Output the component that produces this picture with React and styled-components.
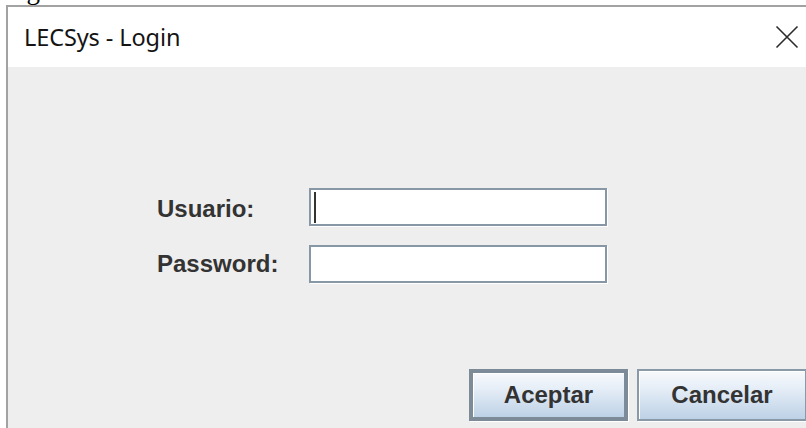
import React from "react";
import styled, { createGlobalStyle } from "styled-components";

const Global = createGlobalStyle`
  html, body {
    margin: 0;
    padding: 0;
    background: #ffffff;
    overflow: hidden;
  }
  body {
    width: 806px;
    height: 428px;
  }
`;

const Page = styled.div`
  width: 806px;
  height: 428px;
  overflow: hidden;
  display: flex;
  flex-direction: column;
`;

/* last line of the document text above the dialog, mostly cut off */
const DocLine = styled.div`
  height: 5px;
  overflow: hidden;
  padding-left: 4px;
  flex: none;
`;

const DocText = styled.div`
  font-family: "Liberation Serif", serif;
  font-size: 27px;
  line-height: 30px;
  color: #000;
  margin-top: -25px;
`;

const Frame = styled.div`
  margin-left: 6px;
  width: 800px;
  flex: 1;
  border-left: 2px solid #a2a2a2;
  border-top: 2px solid #a2a2a2;
  display: flex;
  flex-direction: column;
`;

const TitleBar = styled.div`
  height: 60px;
  flex: none;
  background: #ffffff;
  display: flex;
  align-items: center;
  justify-content: space-between;
  padding: 0 9px 0 16px;
`;

const Title = styled.span`
  font-family: "Noto Sans", "Open Sans", sans-serif;
  font-size: 23.5px;
  color: #141414;
  letter-spacing: -0.1px;
  margin-top: -1px;
`;

const CloseButton = styled.div`
  width: 24px;
  height: 24px;
  display: flex;
  align-items: center;
  justify-content: center;
`;

const Body = styled.div`
  flex: 1;
  background: #eeeeee;
  display: flex;
  flex-direction: column;
  padding: 121px 1px 0 149px;
`;

const Form = styled.div`
  display: grid;
  grid-template-columns: 152px 298px;
  grid-auto-rows: 38px;
  row-gap: 19px;
  align-items: center;
`;

const Label = styled.label`
  font-family: "Liberation Sans", Arial, sans-serif;
  font-weight: bold;
  font-size: 24px;
  color: #333333;
  padding-top: ${(p) => p.$nudge || 0}px;
`;

const Field = styled.div`
  height: 100%;
  box-sizing: border-box;
  background: #ffffff;
  border: 2px solid #8797a5;
  box-shadow: 1px 1px 0 #ffffff;
  display: flex;
  align-items: center;
  padding-left: 3px;
`;

const Caret = styled.span`
  width: 2px;
  height: 31px;
  background: #333333;
`;

const Actions = styled.div`
  margin-top: 86px;
  display: flex;
  justify-content: flex-end;
  gap: 9px;
`;

const Button = styled.button`
  box-sizing: border-box;
  width: ${(p) => p.$w}px;
  height: 52px;
  margin: 0;
  padding: 0;
  font-family: "Liberation Sans", Arial, sans-serif;
  font-weight: bold;
  font-size: 24px;
  color: #333333;
  background: linear-gradient(#f7f9fc 0%, #e6eef7 35%, #bdd1e6 100%);
  border: ${(p) => (p.$default ? "4px solid #7d8b99" : "2px solid #8a99a7")};
  box-shadow: inset 1px 1px 0 #ffffff, 1px 1px 0 #ffffff;
  cursor: default;
`;

const CloseIcon = () => (
  <svg width="24" height="24" viewBox="0 0 24 24">
    <path d="M1.5 1.5 L22.5 22.5 M22.5 1.5 L1.5 22.5" stroke="#2b2b2b" strokeWidth="1.6" fill="none" />
  </svg>
);

export default function App() {
  return (
    <Page>
      <Global />
      <DocLine>
        <DocText>Fig</DocText>
      </DocLine>
      <Frame>
        <TitleBar>
          <Title>LECSys - Login</Title>
          <CloseButton>
            <CloseIcon />
          </CloseButton>
        </TitleBar>
        <Body>
          <Form>
            <Label $nudge={4}>Usuario:</Label>
            <Field>
              <Caret />
            </Field>
            <Label>Password:</Label>
            <Field />
          </Form>
          <Actions>
            <Button $w={159} $default>Aceptar</Button>
            <Button $w={170}>Cancelar</Button>
          </Actions>
        </Body>
      </Frame>
    </Page>
  );
}
